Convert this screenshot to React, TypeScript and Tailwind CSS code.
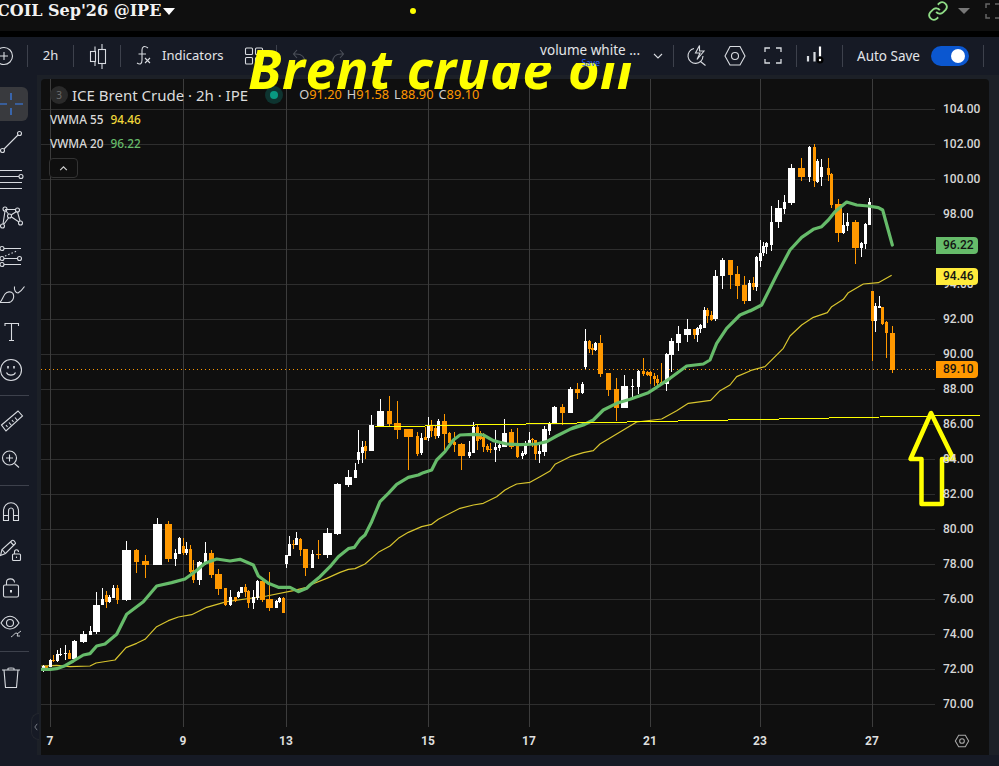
import React from "react";

// rows are read off the 3x crops: [colour, x, wick top, wick bottom, body top, body bottom, body width]
type Row = [string, number, number, number, number, number, number?];

const seg = (ox: number, oy: number, rows: Row[]) =>
  rows.map(([c, x, wt, wb, bt, bb, w = 3]) => ({
    color: c === "w" ? "#ffffff" : "#ff9800",
    x: Math.round(ox + x / 3),
    wt: oy + wt / 3,
    wb: oy + wb / 3,
    bt: oy + bt / 3,
    bb: oy + Math.max(bb, bt + 3) / 3,
    w,
  }));

const candles = [
  ...seg(40, 500, [
    ["w", 10, 495, 515, 498, 510], ["o", 18, 498, 508, 498, 508], ["w", 31, 478, 502, 480, 500], ["o", 40, 465, 485, 481, 484],
    ["w", 52, 450, 485, 462, 482], ["w", 61, 445, 468, 462, 465], ["w", 76, 435, 480, 460, 462], ["o", 88, 450, 478, 460, 477],
    ["w", 103, 420, 482, 423, 477, 5], ["w", 130, 393, 428, 402, 426, 7], ["w", 151, 378, 405, 392, 405], ["w", 169, 277, 402, 315, 396, 7],
    ["w", 187, 265, 316, 297, 315], ["o", 199, 273, 324, 285, 307], ["w", 208, 285, 308, 291, 306], ["w", 220, 256, 295, 264, 295],
    ["o", 232, 255, 312, 264, 300], ["w", 259, 123, 302, 150, 300, 9], ["o", 289, 147, 220, 150, 186, 5], ["o", 316, 165, 234, 183, 195, 7],
    ["w", 352, 54, 195, 72, 195, 9], ["o", 385, 64, 185, 72, 177, 7], ["w", 406, 147, 198, 158, 177], ["w", 418, 111, 163, 114, 162],
    ["o", 430, 115, 166, 138, 160], ["w", 439, 127, 165, 147, 160], ["o", 451, 136, 218, 147, 215], ["o", 460, 180, 249, 210, 240],
    ["w", 478, 184, 255, 186, 240, 5], ["w", 496, 126, 195, 159, 191], ["o", 514, 150, 235, 159, 225, 5], ["o", 535, 207, 285, 222, 267, 7],
    ["o", 556, 264, 317, 264, 315], ["w", 571, 270, 318, 291, 315], ["o", 586, 290, 305, 292, 303], ["w", 595, 273, 295, 276, 291],
    ["w", 604, 262, 280, 262, 278], ["o", 616, 252, 290, 262, 277], ["o", 625, 270, 325, 273, 309], ["w", 640, 270, 327, 291, 309],
    ["w", 652, 240, 300, 243, 294], ["o", 667, 235, 305, 243, 300, 5], ["o", 688, 216, 332, 297, 324, 7], ["w", 709, 300, 325, 303, 323],
    ["w", 718, 290, 310, 294, 306], ["o", 730, 292, 340, 294, 338], ["w", 739, 165, 203, 165, 192], ["w", 748, 108, 168, 132, 168],
    ["o", 760, 120, 148, 132, 134], ["w", 769, 96, 135, 114, 135], ["o", 781, 114, 168, 117, 150], ["o", 796, 148, 227, 148, 204, 5],
    ["w", 817, 150, 205, 162, 204],
  ]),
  ...seg(310, 470, [
    ["w", 7, 240, 294, 252, 294], ["o", 25, 210, 267, 252, 255, 5], ["w", 52, 175, 264, 189, 255, 9], ["w", 82, 39, 195, 42, 192, 7],
    ["w", 115, 0, 50, 21, 45, 7], ["w", 136, -20, 24, 0, 24],
  ]),
  ...seg(320, 380, [
    ["w", 115, 150, 252, 216, 240], ["w", 127, 183, 248, 201, 219], ["o", 136, 183, 236, 198, 213], ["w", 154, 105, 213, 135, 213, 5],
    ["w", 181, 57, 138, 93, 138, 7], ["o", 208, 48, 138, 93, 132, 5], ["o", 232, 63, 177, 129, 150, 7], ["o", 265, 147, 270, 147, 171, 9],
    ["o", 292, 156, 228, 168, 222], ["w", 304, 160, 226, 174, 220], ["o", 316, 140, 180, 171, 179], ["w", 325, 111, 183, 135, 174],
    ["o", 334, 120, 170, 135, 153], ["o", 346, 138, 177, 144, 168], ["w", 355, 118, 174, 123, 168], ["o", 373, 102, 210, 123, 162, 5],
    ["o", 388, 156, 205, 159, 189], ["o", 403, 156, 216, 186, 194], ["o", 424, 189, 270, 192, 228, 7], ["w", 448, 183, 234, 216, 228],
    ["w", 460, 126, 220, 141, 219], ["o", 472, 132, 210, 141, 183], ["o", 481, 153, 180, 160, 177], ["o", 490, 160, 216, 171, 201],
    ["o", 502, 192, 217, 198, 210], ["o", 511, 190, 219, 207, 209], ["w", 526, 150, 246, 201, 210], ["w", 538, 190, 213, 195, 204],
    ["w", 553, 117, 201, 159, 201, 5], ["o", 574, 147, 207, 156, 201, 5], ["o", 592, 144, 234, 198, 231], ["w", 607, 213, 236, 219, 228],
    ["w", 616, 183, 225, 192, 222], ["w", 628, 156, 195, 181, 190], ["o", 637, 174, 201, 177, 181], ["o", 646, 180, 240, 180, 222],
    ["w", 658, 190, 250, 213, 222], ["w", 673, 138, 228, 147, 216, 5], ["w", 688, 126, 165, 129, 153], ["w", 703, 78, 132, 81, 132, 5],
    ["o", 727, 72, 135, 81, 99, 5],
  ]),
  ...seg(560, 240, [
    ["o", 6, 492, 555, 501, 519, 5], ["w", 31, 441, 518, 447, 518, 5], ["o", 51, 430, 477, 447, 459, 5], ["w", 67, 426, 462, 432, 459],
    ["w", 76, 267, 387, 303, 381], ["o", 88, 300, 339, 303, 327], ["o", 97, 312, 345, 324, 330], ["w", 106, 306, 333, 309, 330],
    ["o", 121, 285, 411, 309, 402, 5], ["o", 145, 399, 468, 399, 450, 5], ["o", 169, 414, 543, 447, 504, 5], ["w", 193, 405, 504, 438, 504, 7],
    ["w", 217, 417, 477, 438, 441], ["w", 235, 390, 462, 393, 441], ["o", 250, 354, 408, 393, 402], ["o", 262, 393, 408, 396, 405],
    ["o", 271, 393, 432, 396, 408], ["o", 283, 400, 438, 408, 417], ["o", 292, 405, 441, 417, 429], ["o", 304, 369, 435, 426, 432],
    ["w", 318, 339, 453, 342, 432, 4], ["w", 334, 294, 396, 303, 345, 5], ["w", 355, 258, 333, 282, 309, 5], ["w", 382, 237, 306, 267, 285, 7],
    ["o", 403, 267, 297, 267, 285], ["w", 412, 261, 306, 264, 285], ["w", 421, 252, 279, 255, 267], ["w", 433, 201, 264, 210, 264],
    ["o", 442, 204, 249, 210, 228], ["o", 454, 213, 243, 225, 240], ["w", 466, 90, 243, 108, 237, 5], ["w", 487, 54, 147, 60, 108, 5],
    ["o", 511, 60, 147, 60, 105, 5], ["o", 532, 78, 177, 102, 138, 5], ["o", 553, 108, 192, 135, 183, 5], ["w", 568, 120, 183, 129, 183],
  ]),
  ...seg(750, 130, [
    ["o", 10, 440, 480, 460, 472], ["w", 19, 378, 484, 382, 472], ["w", 31, 330, 410, 370, 392], ["w", 40, 335, 378, 348, 370],
    ["w", 49, 337, 372, 340, 352], ["w", 64, 228, 362, 276, 345], ["w", 85, 210, 293, 234, 276, 7], ["w", 103, 195, 252, 216, 238],
    ["w", 124, 102, 225, 114, 220, 7], ["o", 154, 84, 152, 114, 140, 7], ["w", 178, 48, 155, 50, 140], ["o", 193, 42, 172, 51, 152],
    ["w", 202, 88, 160, 93, 156], ["w", 214, 87, 168, 112, 140], ["o", 235, 84, 152, 114, 135], ["o", 244, 130, 235, 132, 225],
    ["o", 263, 208, 335, 222, 308, 7], ["w", 280, 250, 312, 285, 309], ["w", 292, 248, 303, 276, 288], ["o", 316, 270, 402, 276, 354, 7],
    ["w", 334, 335, 380, 339, 354], ["w", 346, 280, 358, 282, 342], ["w", 358, 203, 285, 215, 285], ["o", 367, 482, 692, 483, 573],
    ["w", 376, 520, 605, 528, 573], ["w", 388, 498, 535, 528, 533], ["o", 397, 531, 585, 531, 582], ["o", 409, 574, 684, 576, 609],
    ["o", 427, 588, 728, 609, 720, 5],
  ]),
];

const path = (ox: number, oy: number, pts: number[][]) => pts.map(([x, y]) => `${ox + x / 3},${oy + y / 3}`).join(" ");

const greenLine = [
  path(40, 500, [[4, 508], [30, 508], [50, 506], [75, 497], [100, 483], [130, 465], [150, 461], [170, 438], [195, 432], [230, 403], [260, 343], [310, 305], [350, 258], [395, 248], [435, 237], [465, 215], [495, 190], [530, 177], [570, 183], [600, 178], [640, 195], [655, 228], [685, 250], [715, 262], [750, 262], [775, 275], [800, 265]]),
  path(310, 470, [[0, 345], [30, 320], [60, 290], [85, 260], [115, 236], [133, 232], [150, 208], [165, 195], [185, 155], [210, 95], [235, 70], [260, 43], [295, 22], [325, 15], [340, 8], [365, 0]]),
  path(320, 380, [[350, 240], [375, 215], [400, 180], [420, 165], [460, 163], [490, 165], [520, 182], [560, 192], [600, 194], [650, 192], [680, 185], [710, 168], [760, 143], [800, 130]]),
  path(560, 240, [[30, 568], [70, 555], [100, 540], [130, 510], [170, 490], [210, 478], [265, 458], [285, 445], [330, 415], [380, 378], [430, 372], [450, 360], [470, 310], [500, 265], [540, 225], [570, 212]]),
  path(750, 130, [[0, 543], [35, 525], [80, 435], [120, 360], [155, 322], [190, 298], [215, 290], [235, 270], [255, 245], [290, 216], [320, 225], [355, 228], [385, 233], [398, 240], [427, 345]]),
].join(" ");

const yellowLine = [
  path(40, 500, [[4, 498], [50, 496], [90, 500], [150, 498], [168, 489], [225, 480], [258, 443], [290, 430], [315, 418], [350, 380], [385, 362], [415, 351], [455, 344], [500, 322], [560, 305], [680, 288], [760, 272], [800, 262]]),
  path(310, 470, [[0, 345], [50, 325], [90, 307], [115, 298], [135, 296], [165, 282], [205, 247], [240, 228], [265, 205], [295, 187], [335, 170], [365, 163], [385, 148], [450, 115], [490, 105], [520, 100], [560, 80], [585, 60], [600, 52]]),
  path(320, 380, [[590, 312], [630, 307], [660, 290], [690, 273], [705, 253], [750, 230], [790, 218], [820, 212], [840, 192]]),
  path(560, 240, [[190, 570], [230, 546], [305, 537], [350, 512], [385, 490], [452, 481], [480, 452], [510, 435], [530, 410], [570, 393]]),
  path(750, 130, [[0, 722], [45, 710], [100, 655], [120, 618], [155, 585], [190, 562], [232, 548], [245, 530], [280, 508], [295, 488], [340, 462], [385, 458], [425, 436]]),
].join(" ");

const prices = Array.from({ length: 18 }, (_, i) => 104 - i * 2);
const days = [
  { label: "7", x: 50 },
  { label: "9", x: 183 },
  { label: "13", x: 286 },
  { label: "15", x: 428 },
  { label: "17", x: 529 },
  { label: "21", x: 650 },
  { label: "23", x: 760 },
  { label: "27", x: 872 },
];
const tags = [
  { label: "96.22", y: 237, bg: "bg-[#66bb6a]" },
  { label: "94.46", y: 268, bg: "bg-[#ffeb3b]" },
  { label: "89.10", y: 361, bg: "bg-[#ff9800]" },
];
const ohlc = [
  { k: "O", v: "91.20" },
  { k: "H", v: "91.58" },
  { k: "L", v: "88.90" },
  { k: "C", v: "89.10" },
];

const Sep = () => <div className="w-px h-[22px] bg-[#3d414c] shrink-0" />;

// toolbar drawing: coordinates are page x, strip y
const Bar = ({ x, w, children }: { x: number; w: number; children: React.ReactNode }) => (
  <svg viewBox={`${x} 37 ${w} 38`} style={{ width: w, height: 38 }} className="shrink-0" fill="none" stroke="#d8dbe0" strokeWidth={1.1}>
    {children}
  </svg>
);

// left rail drawing: page y around the centre of the button
const Tool = ({ cy, children }: { cy: number; children: React.ReactNode }) => (
  <svg viewBox={`0 ${cy - 19} 28 38`} className="w-[28px] h-[38px] block" fill="none" stroke="#d8dbe0" strokeWidth={1.1}>
    {children}
  </svg>
);

const rail = [
  <Tool cy={104} key="cross">
    <path d="M0 104H7M15 104H23M11 93V100M11 108V115" stroke="#3b82f6" strokeWidth={1.2} />
  </Tool>,
  <Tool cy={142} key="trend">
    <circle cx={19.5} cy={133.5} r={2} />
    <circle cx={2.5} cy={150.5} r={2} />
    <path d="M4 149L18 135" />
  </Tool>,
  <Tool cy={180} key="fib">
    <path d="M0 170.5H22M0 176.5H19M0 182.5H22M0 188.5H22" />
    <circle cx={21} cy={176.5} r={2} />
  </Tool>,
  <Tool cy={218} key="pattern">
    <circle cx={5} cy={209} r={2} />
    <circle cx={17.5} cy={210} r={2} />
    <circle cx={9.5} cy={216} r={2} />
    <circle cx={2.5} cy={226} r={2} />
    <circle cx={20.5} cy={223} r={2} />
    <path d="M4 224L8.5 218M11 215L16.5 211.5M6 211L8.5 214M11.5 217L19 222M5 209.5H16M5 211L3 224M17.5 212L20 221" />
  </Tool>,
  <Tool cy={256} key="forecast">
    <circle cx={2} cy={248.5} r={2} />
    <circle cx={2} cy={258.5} r={2} />
    <circle cx={19.5} cy={258.5} r={2} />
    <circle cx={2} cy={264.5} r={2} />
    <path d="M4 248.5H21M4 258.5H17.5M4 264.5H21" />
    <path d="M5 256L18 250.5" strokeDasharray="1.5 2" />
  </Tool>,
  <Tool cy={294} key="brush">
    <path d="M0 302.5H8C12 302.5 15 298 13 293.5C11 291 7 291.5 5 294C3 297 2 300 0 302.5Z" />
    <path d="M14.5 286.5C14 290 15.5 293 18 293C20.5 291.5 22.5 289.5 24.5 286.5" />
  </Tool>,
  <Tool cy={332} key="text">
    <path d="M5 326V323.5H18.5V326M11.5 323.5V340.5M9 340.5H14" />
  </Tool>,
  <Tool cy={370} key="smile">
    <circle cx={11} cy={370} r={10.5} />
    <path d="M8 366V368.5M14 366V368.5" strokeWidth={1.6} />
    <path d="M6.5 372.5C8 376 14 376 15.5 372.5" />
  </Tool>,
];

const rail2 = [
  <Tool cy={421} key="ruler">
    <path d="M1.5 425L18 411L22.5 416L6 431Z" />
    <path d="M6 425L7.5 427M9 422.5L11.5 425.5M12 420L13.5 422M15 417.5L17.5 420.5" />
  </Tool>,
  <Tool cy={459} key="zoom">
    <circle cx={9.5} cy={458} r={7} />
    <path d="M14.5 463.5L19 467.5M9.5 454.5V461.5M6 458H13" />
  </Tool>,
];

const rail3 = [
  <Tool cy={510} key="magnet">
    <path d="M3.5 518.5V509C3.5 498 18.5 498 18.5 509V518.5H13.5V509C13.5 505 8.5 505 8.5 509V518.5Z" />
    <path d="M3.5 513.5H8.5M13.5 513.5H18.5" />
  </Tool>,
  <Tool cy={548} key="pencil">
    <path d="M0.5 553.5L2 547.5L12 538.5C13.5 537.5 15.5 540 15.5 541.5L5.5 551.5Z" />
    <path d="M2 547.5L5.5 551.5M10.5 540L14 543.5" />
    <rect x={12.5} y={552} width={8} height={6.5} rx={1} />
    <path d="M14.5 552V550C14.5 547 18.5 547 18.5 550" />
    <path d="M16.5 554.5V556" />
  </Tool>,
  <Tool cy={586} key="lock">
    <rect x={3.5} y={583} width={15} height={12} rx={1.5} />
    <path d="M6.5 583V580C6.5 575.5 14.5 576 14.5 580.5" />
    <path d="M11 588V590.5" strokeWidth={2} />
  </Tool>,
  <Tool cy={623} key="eye">
    <path d="M1 620C6 611 14 611 19 620C14 628 6 628 1 620Z" />
    <circle cx={10} cy={620} r={3.5} />
    <path d="M11 634C13 633 15 630 16 630C18 630 18 632 17 633H20M17 631L21 628" strokeWidth={0.9} />
  </Tool>,
];

const rail4 = (
  <Tool cy={674} key="trash">
    <path d="M2 667H20M8 667V665.5C8 665 14 665 14 665.5V667M4 667L5.5 684.5H16.5L18 667" />
  </Tool>
);

export default function App() {
  return (
    <div className="relative w-[999px] h-[766px] overflow-hidden bg-[#161a25] font-['Noto_Sans','Liberation_Sans',sans-serif] text-[#e3e5e8]">
      {/* symbol header */}
      <div className="flex items-start h-[31px] bg-[#0f0f0f]">
        <span className="-ml-[3px] -mt-[1px] leading-[24px] font-['DejaVu_Serif',serif] font-bold text-[16px] text-[#f2f2f2]">COIL Sep'26 @IPE</span>
        <div className="ml-[2px] mt-[8px] w-0 h-0 border-x-[6px] border-x-transparent border-t-[7px] border-t-white" />
        <div className="absolute left-[410px] top-[8px] w-[6px] h-[6px] rounded-full bg-[#ffff00]" />
        <div className="ml-auto flex items-center h-[22px]">
          <svg viewBox="0 0 24 24" className="w-[22px] h-[22px] mr-[9px]" fill="none" stroke="#8fdc86" strokeWidth={2}>
            <path d="M10 13a5 5 0 0 0 7.5.5l3-3a5 5 0 0 0-7-7l-1.7 1.7" />
            <path d="M14 11a5 5 0 0 0-7.5-.5l-3 3a5 5 0 0 0 7 7l1.7-1.7" />
          </svg>
          <div className="w-0 h-0 border-x-[6px] border-x-transparent border-t-[6px] border-t-[#777] mr-[15px]" />
          <svg viewBox="0 0 14 18" className="w-[14px] h-[18px]" fill="none" stroke="#666" strokeWidth={1.5}>
            <path d="M5 2H1V6M1 12V16H5M14 2H10M14 16H10" />
          </svg>
        </div>
      </div>
      <div className="h-[6px] bg-black" />

      {/* toolbar */}
      <div className="flex items-center h-[38px]">
        <Bar x={0} w={27}>
          <circle cx={4} cy={56} r={8.5} />
          <path d="M4 52V60M0 56H8" />
        </Bar>
        <Sep />
        <div className="w-[45px] text-center text-[13px]">2h</div>
        <Sep />
        <Bar x={74} w={46}>
          <path d="M95 46.5V66M102 44V69" />
          <rect x={90.5} y={51.5} width={5} height={10} fill="#161a25" />
          <rect x={98.5} y={49.5} width={7} height={14} fill="#161a25" />
        </Bar>
        <Sep />
        <Bar x={121} w={41}>
          <path d="M148 48C144 45 142 47 142 50V60C142 64 140 65 137 63M138.5 54H146M145 58L150 63M150 58L145 63" />
        </Bar>
        <div className="w-[74px] text-[13px]">Indicators</div>
        <Bar x={236} w={40}>
          <rect x={245.5} y={48} width={7} height={6.5} rx={1} />
          <rect x={255.5} y={48} width={7} height={6.5} rx={1} />
          <rect x={245.5} y={57.5} width={7} height={6.5} rx={1} />
          <rect x={255.5} y={57.5} width={7} height={6.5} rx={1} />
        </Bar>
        <Sep />
        <Bar x={277} w={219}>
          <g stroke="#4a4e58">
            <path d="M305 63C305 56 301 54 296 54H293.5M297 50L293.5 54L297 58" />
            <path d="M332.5 63C332.5 56 336 54 341 54H343.5M340 50L343.5 54L340 58" />
          </g>
        </Bar>
        {/* the layout button sits above the title and hides its top */}
        <div className="relative z-20 self-start w-[155px] h-[26px] bg-[#161a25] flex flex-col items-end pr-[11px]">
          <span className="mt-[6px] leading-[14px] text-[13.5px] whitespace-nowrap">volume white ...</span>
          <span className="mr-[40px] mt-[1px] leading-[9px] text-[8.5px] text-[#2962ff]">Save</span>
        </div>
        <Bar x={651} w={22}>
          <path d="M654 54L658 58L662 54" />
        </Bar>
        <Sep />
        <Bar x={674} w={122}>
          <path d="M694 48.5A7.5 7.5 0 1 0 703 56M700.5 61.5L705.5 65.5" />
          <path d="M699.5 45.5L695.5 53H700L697 59.5L704 51H699.5Z" />
          <path d="M725 56L730 46.5H740L745 56L740 65H730Z" />
          <circle cx={735} cy={56} r={3.5} />
          <path d="M765 52V48H770M776 48H781V52M781 59V63H776M770 63H765V59" strokeWidth={1.3} />
        </Bar>
        <Sep />
        <Bar x={797} w={45}>
          <path d="M808 61.5V56M814.5 61.5V52" strokeWidth={2.2} />
          <path d="M820 46.5V56.5" stroke="#ffffff" strokeWidth={2.2} />
          <circle cx={820} cy={60} r={3.5} fill="#000" stroke="none" />
          <circle cx={820} cy={60} r={1.2} fill="#fff" stroke="none" />
        </Bar>
        <Sep />
        <div className="ml-[14px] w-[74px] text-[13.5px]">Auto Save</div>
        <div className="flex items-center justify-end w-[38px] h-[20px] rounded-full bg-[#0b57d0] px-[4px]">
          <div className="w-[14px] h-[14px] rounded-full bg-white" />
        </div>
        <div className="ml-[14px]"><Sep /></div>
      </div>

      {/* body */}
      <div className="flex h-[691px]">
        <div className="w-[37px] shrink-0 pt-[10px]">
          <div className="relative">
            {rail.map((t, i) => (
              <div key={i} className="h-[38px] w-[28px] relative">
                {i === 0 && <div className="absolute inset-x-0 top-[2px] bottom-[2px] rounded-r-md bg-[#393a3e]" />}
                <div className="relative">{t}</div>
              </div>
            ))}
          </div>
          <div className="my-[6px] h-px w-[29px] bg-[#3d414c]" />
          {rail2}
          <div className="my-[7px] h-px w-[29px] bg-[#3d414c]" />
          {rail3}
          <div className="my-[6px] h-px w-[29px] bg-[#3d414c]" />
          {rail4}
        </div>
        <div className="relative flex-1 bg-[#1c2027] pt-[4px] pl-[4px] pr-[10px]">
          {/* chart */}
          <div className="relative w-[948px] h-[676px] bg-[#0f0f0f] rounded-t-sm overflow-hidden">
            <svg viewBox="41 79 948 676" className="absolute inset-0 w-full h-full" fill="none" shapeRendering="crispEdges">
              {prices.map((p, i) => (
                <path key={p} d={`M41 ${109.5 + i * 35}H935`} stroke="#2e2e2e" />
              ))}
              {days.map((d) => (
                <path key={d.label} d={`M${d.x + 0.5} 79V727`} stroke="#3c3c3c" />
              ))}
              <path d="M41 369.5H935" stroke="#ff9800" strokeDasharray="1 3" />
              <g shapeRendering="geometricPrecision">
                <polyline points={yellowLine} stroke="#d8c52e" strokeWidth={1.2} strokeLinejoin="round" />
              </g>
              {candles.map((c, i) => (
                <g key={i}>
                  <rect x={c.x} y={c.wt} width={1} height={c.wb - c.wt} fill={c.color} />
                  <rect x={c.x - (c.w - 1) / 2} y={c.bt} width={c.w} height={c.bb - c.bt} fill={c.color} />
                </g>
              ))}
              <g shapeRendering="geometricPrecision">
                <polyline points={greenLine} stroke="#66bb6a" strokeWidth={3.2} strokeLinejoin="round" strokeLinecap="round" />
                <path d="M931 413L910.5 459H921.5V504H942V459H953.5Z" stroke="#ffff00" strokeWidth={4.5} strokeLinejoin="round" />
              </g>
              <path d="M375 427L981 415" stroke="#ffff00" strokeWidth={1} />
            </svg>

            {/* legend */}
            <div className="absolute left-[9px] top-[7px] flex items-center h-[18px]">
              <div className="flex items-center justify-center w-[18px] h-[18px] rounded-full bg-[#2a2a2a] text-[10px] text-[#6b6b6b]">3</div>
              <span className="ml-[4px] text-[15px] text-[#dcdcdc] whitespace-nowrap">ICE Brent Crude · 2h · IPE</span>
              <div className="ml-[17px] flex items-center justify-center w-[18px] h-[18px] rounded-full bg-[#0e3430]">
                <div className="w-[8px] h-[8px] rounded-full bg-[#089981]" />
              </div>
              <div className="ml-[16px] flex gap-[5px] text-[12.8px] text-[#d0d0d0] whitespace-nowrap">
                {ohlc.map((o) => (
                  <span key={o.k}>
                    {o.k}
                    <span className="text-[#ff9800]">{o.v}</span>
                  </span>
                ))}
              </div>
            </div>
            <div className="absolute left-[9px] top-[32px] flex items-center h-[18px] text-[11.8px] font-medium text-[#d8d8d8] whitespace-nowrap">
              VWMA 55<span className="ml-[7px] text-[#f2d93a]">94.46</span>
            </div>
            <div className="absolute left-[9px] top-[56px] flex items-center h-[18px] text-[11.8px] font-medium text-[#d8d8d8] whitespace-nowrap">
              VWMA 20<span className="ml-[7px] text-[#66bb6a]">96.22</span>
            </div>
            <div className="absolute left-[8px] top-[79px] flex items-center justify-center w-[29px] h-[20px] rounded border border-[#333] bg-[#0f0f0f]">
              <svg viewBox="0 0 10 6" className="w-[9px] h-[5px]" fill="none" stroke="#d0d0d0" strokeWidth={1.4}>
                <path d="M1 5L5 1L9 5" />
              </svg>
            </div>

            {/* price axis */}
            {prices.map((p, i) => (
              <div
                key={p}
                className="absolute left-[902px] h-[16px] leading-[16px] text-[12px] font-medium font-['Roboto',sans-serif] text-[#d6d6d6]"
                style={{ top: 22 + i * 35 }}
              >
                {p}.00
              </div>
            ))}
            {tags.map((t) => (
              <div
                key={t.label}
                className={`absolute left-[895px] w-[42px] h-[17px] rounded-r-sm pl-[7px] leading-[17px] text-[12px] font-medium font-['Roboto',sans-serif] text-[#131313] ${t.bg}`}
                style={{ top: t.y - 79 }}
              >
                {t.label}
              </div>
            ))}

            {/* time axis */}
            {days.map((d) => (
              <div
                key={d.label}
                className="absolute top-[653px] -translate-x-1/2 text-[12px] font-bold font-['Roboto',sans-serif] text-[#dedede]"
                style={{ left: d.x - 41 }}
              >
                {d.label}
              </div>
            ))}
            <svg viewBox="0 0 24 24" className="absolute left-[913px] top-[654px] w-[16px] h-[16px]" fill="none" stroke="#a8a8a8" strokeWidth={1.6}>
              <path d="M2 12L7 3.5H17L22 12L17 20.5H7Z" />
              <circle cx={12} cy={12} r={3.5} />
            </svg>
          </div>
          <div className="h-[11px] bg-[#161a25] -ml-[4px] -mr-[10px]" />
        </div>
      </div>

      {/* collapse handle */}
      <div className="absolute left-[31px] top-[713px] flex items-center justify-center w-[8px] h-[27px] rounded-l-lg bg-[#161a25] border border-[#23262e] border-r-0">
        <svg viewBox="0 0 5 10" className="w-[4px] h-[8px]" fill="none" stroke="#7b7f88" strokeWidth={1.2}>
          <path d="M4 1L1 5L4 9" />
        </svg>
      </div>

      {/* hand-typed annotation over the chart */}
      <div className="absolute left-[248px] top-[44px] z-10 font-['Open_Sans','Noto_Sans',sans-serif] font-bold italic text-[54px] tracking-[0.6px] leading-[48px] text-[#ffff00] whitespace-nowrap pointer-events-none">
        Brent crude oil
      </div>
    </div>
  );
}
